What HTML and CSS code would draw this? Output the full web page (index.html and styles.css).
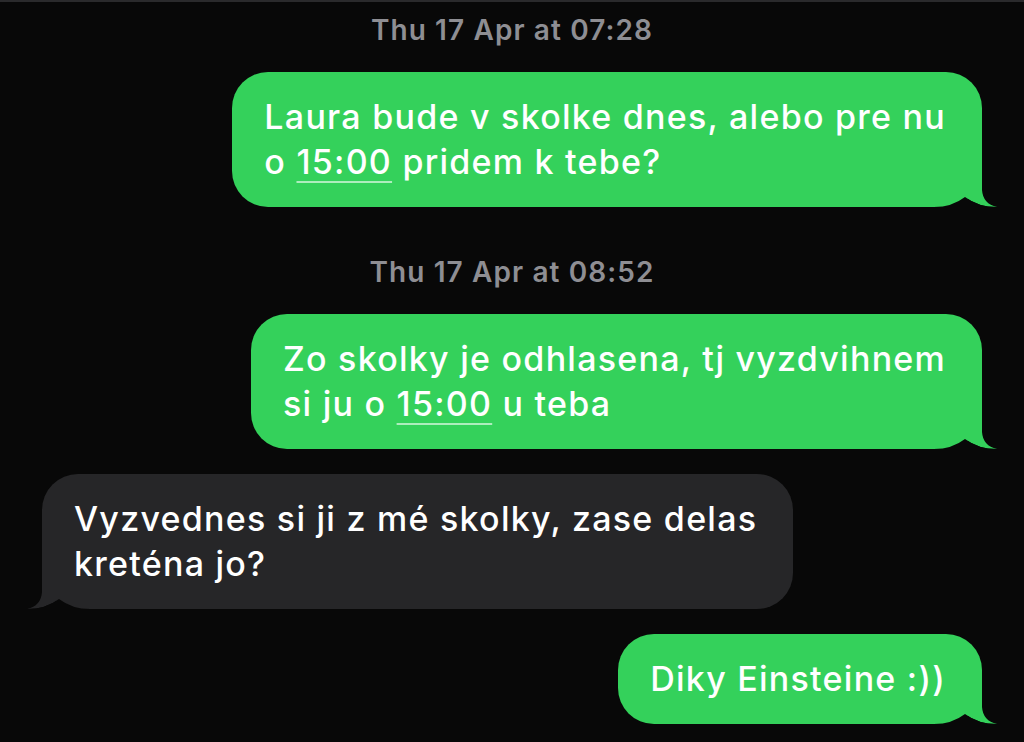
FILE: index.html
```html
<!DOCTYPE html>
<html>
<head>
    <title>Messages</title>
    <meta http-equiv="content-type" content="text/html; charset=UTF-8">
    <meta name="viewport" content="width=device-width, initial-scale=1">
    <link rel="stylesheet" href="styles.css">
</head>
<body>
    <div id="thread">
        <div class="stamp first">Thu 17 Apr at 07:28</div>

        <div class="row out">
            <div class="bubble sent">
                <span class="text">Laura bude v skolke dnes, alebo pre nu<br>
                o <span class="link">15:00</span> pridem k tebe?</span>
                <svg class="tail" viewBox="0 0 64 40" width="64" height="40">
                    <path class="fill" d="M0,0 H48 V23 Q49,37 63,40 Q44,40 31,30 Q18,40 0,40 Z"/>
                    <path class="cut" d="M0,40 Q18,40 31,30 Q44,40 63,40 Z"/>
                </svg>
            </div>
        </div>

        <div class="stamp">Thu 17 Apr at 08:52</div>

        <div class="row out">
            <div class="bubble sent">
                <span class="text">Zo skolky je odhlasena, tj vyzdvihnem<br>
                si ju o <span class="link">15:00</span> u teba</span>
                <svg class="tail" viewBox="0 0 64 40" width="64" height="40">
                    <path class="fill" d="M0,0 H48 V23 Q49,37 63,40 Q44,40 31,30 Q18,40 0,40 Z"/>
                    <path class="cut" d="M0,40 Q18,40 31,30 Q44,40 63,40 Z"/>
                </svg>
            </div>
        </div>

        <div class="row in">
            <div class="bubble received">
                <span class="text">Vyzvednes si ji z mé skolky, zase delas<br>
                kreténa jo?</span>
                <svg class="tail" viewBox="0 0 64 40" width="64" height="40">
                    <path class="fill" d="M0,0 H48 V23 Q49,37 63,40 Q44,40 31,30 Q18,40 0,40 Z"/>
                    <path class="cut" d="M0,40 Q18,40 31,30 Q44,40 63,40 Z"/>
                </svg>
            </div>
        </div>

        <div class="row out">
            <div class="bubble sent">
                <span class="text">Diky Einsteine :))</span>
                <svg class="tail" viewBox="0 0 64 40" width="64" height="40">
                    <path class="fill" d="M0,0 H48 V23 Q49,37 63,40 Q44,40 31,30 Q18,40 0,40 Z"/>
                    <path class="cut" d="M0,40 Q18,40 31,30 Q44,40 63,40 Z"/>
                </svg>
            </div>
        </div>
    </div>
</body>
</html>
```

FILE: styles.css
```css
html, body {
    margin: 0;
    padding: 0;
    background: #080808;
}

body {
    font-family: Inter, 'Noto Sans', 'DejaVu Sans', sans-serif;
    border-top: 2px solid #2a2a2c;
    height: 740px;
    overflow: hidden;
}

#thread {
    padding: 0 42px;
}

.stamp {
    text-align: center;
    color: #8e8e93;
    font-size: 28px;
    font-weight: 600;
    letter-spacing: 1.1px;
    line-height: 30px;
    margin: 50px 0 27px;
}

    .stamp.first {
        margin: 13px 0 27px;
    }

.row {
    display: flex;
    margin-bottom: 25px;
}

    .row.out {
        justify-content: flex-end;
    }

    .row.in {
        justify-content: flex-start;
    }

.bubble {
    position: relative;
    padding: 22px 36px 23px 32px;
    border-radius: 36px;
    color: #fff;
    font-size: 34px;
    font-weight: 500;
    letter-spacing: 1.25px;
    line-height: 45px;
    white-space: nowrap;
}

    .bubble .text {
        position: relative;
        z-index: 1;
    }

.sent {
    background: #34d15b;
}

.received {
    background: #262628;
}

.link {
    text-decoration: underline;
    text-decoration-color: rgba(255, 255, 255, 0.6);
    text-decoration-thickness: 2px;
    text-underline-offset: 7px;
}

.tail {
    position: absolute;
    bottom: 0;
    display: block;
}

    .tail .cut {
        fill: #080808;
    }

.sent .tail {
    right: -16px;
}

    .sent .tail .fill {
        fill: #34d15b;
    }

.received .tail {
    left: -16px;
    transform: scaleX(-1);
}

    .received .tail .fill {
        fill: #262628;
    }
```
